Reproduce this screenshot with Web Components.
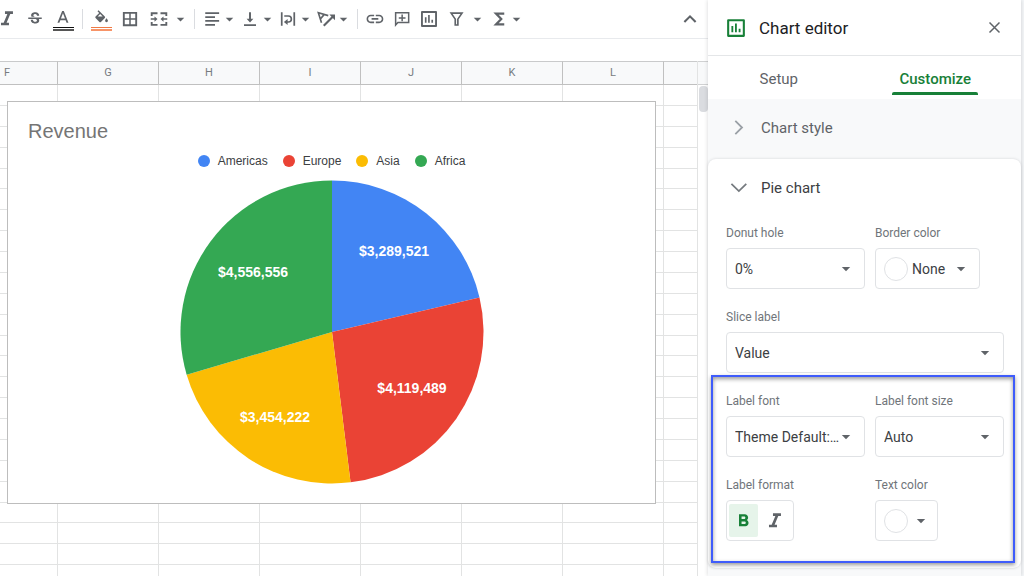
<!DOCTYPE html>
<html lang="en">
<head>
<meta charset="utf-8">
<title>Revenue - Chart editor</title>
<style>
  html, body { height: 100%; }
  body { margin: 0; background: #fff; font-family: Roboto, "Liberation Sans", sans-serif; color: #3c4043; overflow: hidden; }
</style>
</head>
<body>
<sheets-app></sheets-app>
<script>
const ICONS = {
  italic: '<path transform="translate(-4 -3.500) scale(1.330)" d="M10 4v2.600h2.400l-3.700 8.800H6V18h8v-2.600h-2.400l3.700-8.800H18V4z"/>',
  strike: '<path d="M7.24 8.75c-.26-.48-.39-1.03-.39-1.67 0-.61.13-1.16.4-1.67.26-.5.63-.93 1.11-1.29.48-.35 1.05-.63 1.7-.83.66-.19 1.39-.29 2.18-.29.81 0 1.54.11 2.21.34.66.22 1.23.54 1.69.94.47.4.83.88 1.08 1.43.25.55.38 1.15.38 1.81h-3.01c0-.31-.05-.59-.15-.85-.09-.27-.24-.49-.44-.68-.2-.19-.45-.33-.75-.44-.3-.1-.66-.16-1.06-.16-.39 0-.74.04-1.03.13-.29.09-.53.21-.72.36-.19.16-.34.34-.44.55-.1.21-.15.43-.15.66 0 .48.25.88.74 1.21.38.25.77.48 1.41.7H7.39c-.05-.08-.11-.17-.15-.25zM21 12v-2H3v2h9.62c.18.07.4.14.55.2.37.17.66.34.87.51.21.17.35.36.43.57.07.2.11.43.11.69 0 .23-.05.45-.14.66-.09.2-.23.38-.42.53-.19.15-.42.26-.71.35-.29.08-.63.13-1.01.13-.43 0-.83-.04-1.18-.13s-.66-.23-.91-.42c-.25-.19-.45-.44-.59-.75-.14-.31-.25-.76-.25-1.21H6.4c0 .55.08 1.13.24 1.58.16.45.37.85.65 1.21.28.35.6.66.98.92.37.26.78.48 1.22.65.44.17.9.3 1.38.39.48.08.96.13 1.44.13.8 0 1.53-.09 2.18-.28s1.21-.45 1.67-.79c.46-.34.82-.77 1.07-1.27s.38-1.07.38-1.71c0-.6-.1-1.14-.31-1.61-.05-.11-.11-.23-.17-.33H21z"/>',
  color: '<path transform="translate(-1.6 -2.2) scale(1.13)" d="M11 3L5.5 17h2.25l1.12-3h6.25l1.12 3h2.25L13 3h-2zm-1.38 9L12 5.67 14.38 12H9.62z"/><path fill="#111" d="M-1.330 22.670h28V24h-28z"/><path fill="#555" d="M-1.330 25.330h28V28h-28z"/>',
  fill: '<path transform="translate(1.5 .3) scale(.94)" fill-rule="evenodd" d="M16.56 8.94L7.62 0 6.21 1.41l2.38 2.38-5.15 5.15c-.59.59-.59 1.54 0 2.12l5.5 5.5c.29.29.68.44 1.06.44s.77-.15 1.06-.44l5.5-5.5c.59-.58.59-1.53 0-2.12zM6.5 9L10 5.21 13.5 9zM19 11.5s-2 2.17-2 3.5c0 1.1.9 2 2 2s2-.9 2-2c0-1.33-2-3.5-2-3.5z"/><path fill="#ee7a45" d="M-1.330 22.670h28V24h-28z"/><path fill="#f79468" d="M-1.330 25.330h28V28h-28z"/>',
  borders: '<path d="M2.500 2.500v19h19v-19zM11 19H5v-6h6zm0-8H5V5h6zm8 8h-6v-6h6zm0-8h-6V5h6z" fill-rule="evenodd"/>',
  merge: '<path d="M1 3h9v2.500H3.500V8H1zM14 3h9v5h-2.500V5.500H14zM1 16h2.500v2.500H10V21H1zM20.500 16H23v5h-9v-2.500h6.500zM1 11h5V8.500l4 3.500-4 3.500V13H1zM23 11h-5V8.500L14 12l4 3.500V13h5z"/>',
  align: '<path d="M3 3h18.500v2.400H3zM3 8.200h13v2.400H3zM3 13.400h18.500v2.400H3zM3 18.600h13V21H3z"/>',
  valign: '<path d="M16.500 11.500h-3.200V3h-2.600v8.500H7.500L12 16.500zM4 19v2.400h16V19z"/>',
  wrap: '<path d="M2.500 3h2.300v18H2.500zM19.200 3h2.300v18h-2.300z"/><path fill="none" stroke="currentColor" stroke-width="2.200" d="M7 8h5.500a3.800 3.800 0 0 1 0 8H10"/><path d="M6.500 16l5-4v8z"/>',
  rotate: '<g fill="none" stroke="currentColor" stroke-width="2.200"><path d="M6 17L1.800 3.500 15 7.500M4.500 12L10 5.500"/><path d="M9 21L21 9" stroke-width="2.800"/></g><path d="M24 6v7.500L16.500 6z"/>',
  link: '<path transform="translate(-1.500 -1.500) scale(1.120)" d="M3.900 12c0-1.710 1.390-3.100 3.100-3.100h4V7H7c-2.760 0-5 2.240-5 5s2.240 5 5 5h4v-1.900H7c-1.710 0-3.100-1.390-3.100-3.100zM8 13h8v-2H8v2zm9-6h-4v1.900h4c1.710 0 3.100 1.390 3.100 3.100s-1.390 3.100-3.100 3.100h-4V17h4c2.760 0 5-2.240 5-5s-2.240-5-5-5z"/>',
  comment: '<path fill="none" stroke="currentColor" stroke-width="2" d="M3.500 20V3.800h17.400v13H6.500z"/><path d="M11.200 6h2v3.500h3.500v2h-3.500V15h-2v-3.500H7.700v-2h3.500z"/>',
  chart: '<path fill="none" stroke="currentColor" stroke-width="2.500" stroke-linejoin="round" d="M2.600 2.600h18.800v18.800H2.600z"/><path d="M6.500 9.500h2.200V17H6.500zM10.800 6.500H13V17h-2.200zM15.200 13h2.200v4h-2.200z"/>',
  filter: '<path fill="none" stroke="currentColor" stroke-width="2.200" d="M5.500 4.200h14.500l-5.500 8V20H11v-7.800z"/>',
  sum: '<path fill="none" stroke="currentColor" stroke-width="3" d="M19 4.700H8l7 7.300-7 7.300h11"/>',
  up: '<path fill="none" stroke="currentColor" stroke-width="2.800" d="M4.500 16l7.500-7.500 7.500 7.500"/>',
  close: '<path fill="none" stroke="currentColor" stroke-width="2.300" d="M4 4l16 16M20 4L4 20"/>',
  right: '<path fill="none" stroke="currentColor" stroke-width="2.500" d="M7.500 2.500L17 12l-9.500 9.500"/>',
  down: '<path fill="none" stroke="currentColor" stroke-width="2.500" d="M2 7l10.500 10L23 7"/>',
  caret: '<path d="M2 7h20L12 17.500z"/>'
};
const icon = (name, size) => `<svg viewBox="0 0 24 24" width="${size}" height="${size}" fill="currentColor" aria-hidden="true">${ICONS[name]}</svg>`;
const RESET = `
  *, *::before, *::after { box-sizing: border-box; }
  button, select { font: inherit; color: inherit; background: none; border: 0; margin: 0; padding: 0; }
  svg { display: block; flex: none; overflow: visible; }`;

function define(name, render) {
  customElements.define(name, class extends HTMLElement {
    connectedCallback() {
      if (this.shadowRoot) return;
      this.attachShadow({ mode: 'open' }).innerHTML = render(this);
    }
  });
}

define('tool-button', el => `
  <style>${RESET}
    :host { display: block; }
    button { display: flex; align-items: center; gap: var(--caret-gap, 2px); height: 20px; color: #5f6368; }
    .glyph { width: 20px; display: flex; justify-content: center; }
    .caret { width: 10px; display: flex; justify-content: center; }
  </style>
  <button type="button" aria-label="${el.getAttribute('label')}">
    <span class="glyph">${icon(el.getAttribute('icon'), 18)}</span>
    ${el.hasAttribute('menu') ? `<span class="caret">${icon('caret', 9)}</span>` : ''}
  </button>`);

define('tool-group', () => `
  <style>
    :host { display: flex; align-items: center; height: 20px; gap: 7px; }
  </style><slot></slot>`);

define('sheet-toolbar', () => `
  <style>${RESET}
    :host { display: flex; height: 39px; align-items: center; border-bottom: 1px solid #e8eaed; padding-right: 8px; }
    tool-group { border-right: 1px solid #dadce0; }
    .text { margin-left: -3px; padding-right: 9px; gap: 8px; }
    .cell { padding: 0 9px 0 8px; gap: 9px; --caret-gap: 6px; }
    .place { padding: 0 9px 0 7px; gap: 6px; }
    .insert { padding-left: 7px; border: 0; flex: 1; }
    .insert [icon=filter] { --caret-gap: 6px; }
  </style>
  <tool-group class="text">
    <tool-button icon="italic" label="Italic"></tool-button>
    <tool-button icon="strike" label="Strikethrough"></tool-button>
    <tool-button icon="color" label="Text color"></tool-button>
  </tool-group>
  <tool-group class="cell">
    <tool-button icon="fill" label="Fill color"></tool-button>
    <tool-button icon="borders" label="Borders"></tool-button>
    <tool-button icon="merge" label="Merge cells" menu></tool-button>
  </tool-group>
  <tool-group class="place">
    <tool-button icon="align" label="Horizontal align" menu></tool-button>
    <tool-button icon="valign" label="Vertical align" menu></tool-button>
    <tool-button icon="wrap" label="Text wrapping" menu></tool-button>
    <tool-button icon="rotate" label="Text rotation" menu></tool-button>
  </tool-group>
  <tool-group class="insert">
    <tool-button icon="link" label="Insert link"></tool-button>
    <tool-button icon="comment" label="Insert comment"></tool-button>
    <tool-button icon="chart" label="Insert chart"></tool-button>
    <tool-button icon="filter" label="Create a filter" menu></tool-button>
    <tool-button icon="sum" label="Functions" menu></tool-button>
  </tool-group>
  <tool-button icon="up" label="Hide the menus"></tool-button>`);

define('sheet-grid', () => {
  const cols = ['F', 'G', 'H', 'I', 'J', 'K', 'L', ''];
  const row = `<tr>${'<td></td>'.repeat(cols.length)}</tr>`;
  return `
  <style>${RESET}
    :host { display: flex; overflow: hidden; }
    .cells { flex: 1; min-width: 0; overflow: hidden; }
    table { width: 808px; height: calc(100% + 10px); margin-left: -43px; table-layout: fixed; border-collapse: separate; border-spacing: 0; }
    th, td { padding: 0; border: solid #e2e3e3; border-width: 0 1px 1px 0; }
    th { height: 24px; background: #f8f9fa; border-color: #c0c0c0; border-top: 1px solid #c9cacb; font-size: 11px; line-height: 16px; font-weight: 400; color: #777b80; }
    .bar { width: 11px; border-left: 1px solid #e2e3e3; }
    .cap { height: 24px; background: #f8f9fa; border: solid #d0d1d2; border-width: 1px 0; }
    .thumb { height: 26px; margin: 1px 0 0 1px; border-radius: 4px; background: #dadce0; }
  </style>
  <div class="cells"><table>
    <thead><tr>${cols.map(c => `<th scope="col">${c}</th>`).join('')}</tr></thead>
    <tbody>${row.repeat(24)}</tbody>
  </table></div>
  <div class="bar"><div class="cap"></div><div class="thumb"></div></div>`;
});

define('pie-chart', () => {
  const data = [
    ['Americas', 3289521, '#4285f4', 62, -76],
    ['Europe', 4119489, '#ea4335', 80, 61],
    ['Asia', 3454222, '#fbbc04', -57, 90],
    ['Africa', 4556556, '#34a853', -79, -55]
  ];
  const total = data.reduce((s, d) => s + d[1], 0), r = 151.5;
  const at = t => `${r * Math.sin(t * 2 * Math.PI)} ${-r * Math.cos(t * 2 * Math.PI)}`;
  let sum = 0;
  const slices = data.map(([, v, c]) => {
    const a = sum / total; sum += v;
    return `<path fill="${c}" d="M0 0L${at(a)}A${r} ${r} 0 0 1 ${at(sum / total)}z"/>`;
  }).join('');
  const labels = data.map(([, v, , x, y]) => `<text x="${x}" y="${y}">$${v.toLocaleString('en-US')}</text>`).join('');
  return `
  <style>${RESET}
    :host { display: flex; flex-direction: column; align-items: center; background: #fff; border: 1px solid #bdbdbd; padding-bottom: 19px; font-family: "Liberation Sans", Arial, sans-serif; }
    h2 { align-self: flex-start; margin: 17px 0 0 20px; font-size: 20px; line-height: 24px; font-weight: 400; color: #757575; }
    ul { display: flex; gap: 15px; list-style: none; margin: 10px 0 11px; padding: 0; font-size: 12px; line-height: 16px; color: #3c4043; }
    li { display: flex; align-items: center; gap: 8px; }
    li::before { content: ""; width: 12px; height: 12px; border-radius: 50%; background: var(--c); }
    text { font-size: 14px; font-weight: 700; fill: #fff; text-anchor: middle; }
  </style>
  <h2>Revenue</h2>
  <ul>${data.map(d => `<li style="--c:${d[2]}">${d[0]}</li>`).join('')}</ul>
  <svg width="304" height="304" viewBox="-152 -152 304 304" role="img" aria-label="Revenue by region">${slices}${labels}</svg>`;
});

define('select-field', el => `
  <style>${RESET}
    :host { display: flex; flex-direction: column; align-items: flex-start; gap: 7px; }
    label { font-size: 12px; line-height: 16px; color: #70757a; }
    .box { position: relative; display: flex; align-items: center; width: 100%; height: 41px; border: 1px solid #e0e2e5; border-radius: 4px; color: #3c4043; }
    .swatch { position: absolute; left: 8px; width: 24px; height: 24px; border: 1px solid #e0e2e5; border-radius: 50%; pointer-events: none; }
    select, button { appearance: none; width: 100%; height: 100%; padding-left: 8px; font-size: 14px; cursor: pointer; }
    .swatch ~ select { padding-left: 36px; }
    svg { position: absolute; right: 13px; color: #5f6368; pointer-events: none; }
    :host([swatch]) .box { width: ${el.getAttribute('options') ? 105 : 63}px; }
    :host([swatch]) svg { right: ${el.getAttribute('options') ? 13 : 11}px; }
  </style>
  <label for="f">${el.getAttribute('label')}</label>
  <div class="box">
    ${el.hasAttribute('swatch') ? '<span class="swatch"></span>' : ''}
    ${el.getAttribute('options')
      ? `<select id="f">${el.getAttribute('options').split('|').map(o => `<option>${o}</option>`).join('')}</select>`
      : '<button id="f" type="button" aria-haspopup="true"></button>'}
    ${icon('caret', 10)}
  </div>`);

define('format-field', () => `
  <style>${RESET}
    :host { display: flex; flex-direction: column; align-items: flex-start; gap: 7px; }
    .name { font-size: 12px; line-height: 16px; color: #70757a; }
    .box { display: flex; height: 41px; padding: 3px 4px 3px 2px; gap: 2px; border: 1px solid #e0e2e5; border-radius: 4px; }
    button { width: 29px; height: 33px; display: flex; align-items: center; justify-content: center; border-radius: 2px; color: #5f6368; }
    .on { background: #e6f4ea; color: #188038; }
  </style>
  <span class="name" id="n">Label format</span>
  <div class="box" role="group" aria-labelledby="n">
    <button type="button" class="on" aria-label="Bold" aria-pressed="true"><svg viewBox="0 0 24 24" width="18" height="18" fill="currentColor"><path transform="translate(-2 -1.500) scale(1.130)" d="M15.600 10.790c.970-.670 1.650-1.770 1.650-2.790 0-2.260-1.750-4-4-4H6.500v14h7.540c2.090 0 3.710-1.700 3.710-3.790 0-1.520-.860-2.820-2.150-3.420zM9.500 6.500H12.500c.830 0 1.500.670 1.500 1.500s-.670 1.500-1.500 1.500h-3zm3.500 9H9.500v-3H13c.830 0 1.500.670 1.500 1.500s-.670 1.500-1.500 1.500z"/></svg></button>
    <button type="button" aria-label="Italic" aria-pressed="false">${icon('italic', 18)}</button>
  </div>`);

define('panel-section', el => `
  <style>${RESET}
    :host { display: block; background: #f8f9fa; color: #5f6368; padding-bottom: 3px; }
    :host([open]) { background: #fff; color: #3c4043; border-radius: 8px; box-shadow: 0 0 3px #3c404330; padding: 0 17px 5px 18px; }
    h3 { margin: 0; font-size: 15px; line-height: 20px; font-weight: 400; }
    button { display: flex; align-items: center; gap: 14px; width: 100%; height: 57px; padding-left: 22px; text-align: left; }
    :host([open]) button { padding-left: 4px; }
    svg { color: #9aa0a6; }
    :host([open]) svg { color: #757a7f; }
    .body { display: flex; flex-direction: column; gap: 20px; padding-top: 9px; }
    :host(:not([open])) .body { display: none; }
  </style>
  <h3><button type="button" aria-expanded="${el.hasAttribute('open')}">${icon(el.hasAttribute('open') ? 'down' : 'right', 17)}<span>${el.getAttribute('heading')}</span></button></h3>
  <div class="body"><slot></slot></div>`);

define('chart-editor', () => `
  <style>${RESET}
    :host { display: flex; flex-direction: column; background: #f8f9fa; box-shadow: 0 0 4px #3c404338; }
    header { display: flex; align-items: center; gap: 13px; height: 56px; padding: 0 19px 0 18px; background: #fff; border-bottom: 1px solid #e4e6e8; }
    header > svg { color: #188038; }
    h2 { flex: 1; margin: 0; font-size: 17px; line-height: 24px; font-weight: 400; color: #202124; }
    header button { color: #5f6368; }
    nav { display: grid; grid-template-columns: 1fr 1fr; column-gap: 15px; justify-items: center; background: #fff; padding: 0 15px 4px 0; }
    nav button { position: relative; height: 39px; padding: 7px 7px 0; font-size: 15px; line-height: 20px; color: #5f6368; }
    nav [aria-selected=true] { color: #188038; font-weight: 500; }
    nav [aria-selected=true]::after { content: ""; position: absolute; left: 0; right: 0; bottom: 0; height: 3px; border-radius: 2px 2px 0 0; background: #188038; }
    .pair { display: grid; grid-template-columns: 14fr 13fr; gap: 20px 10px; }
    .marked { margin: -18px -11px 0 -15px; padding: 16px 9px 20px 13px; border: 2px solid #3f5cfb; box-shadow: 0 2px 4px #0006, inset 0 2px 4px #0006; }
  </style>
  <header>${icon('chart', 20)}<h2>Chart editor</h2><button type="button" aria-label="Close">${icon('close', 15)}</button></header>
  <nav role="tablist"><button type="button" role="tab" aria-selected="false">Setup</button><button type="button" role="tab" aria-selected="true">Customize</button></nav>
  <panel-section heading="Chart style"></panel-section>
  <panel-section heading="Pie chart" open>
    <div class="pair">
      <select-field label="Donut hole" options="0%|25%|50%|75%"></select-field>
      <select-field label="Border color" options="None" swatch></select-field>
    </div>
    <select-field label="Slice label" options="Value|None|Label|Percentage"></select-field>
    <div class="pair marked">
      <select-field label="Label font" options="Theme Default:…"></select-field>
      <select-field label="Label font size" options="Auto"></select-field>
      <format-field></format-field>
      <select-field label="Text color" swatch></select-field>
    </div>
  </panel-section>`);

define('sheets-app', () => `
  <style>${RESET}
    :host { display: grid; grid-template-columns: 1fr 313px; height: 100%; padding-right: 3px; background: #f4f6f8; }
    main { display: grid; grid-template: auto 22px 1fr / minmax(0, 1fr); min-width: 0; min-height: 0; background: #fff; }
    sheet-grid, pie-chart { grid-area: 3 / 1; }
    sheet-grid { min-height: 0; }
    pie-chart { align-self: start; margin: 40px 52px 0 7px; }
  </style>
  <main>
    <sheet-toolbar></sheet-toolbar>
    <sheet-grid></sheet-grid>
    <pie-chart></pie-chart>
  </main>
  <chart-editor></chart-editor>`);
</script>
</body>
</html>
